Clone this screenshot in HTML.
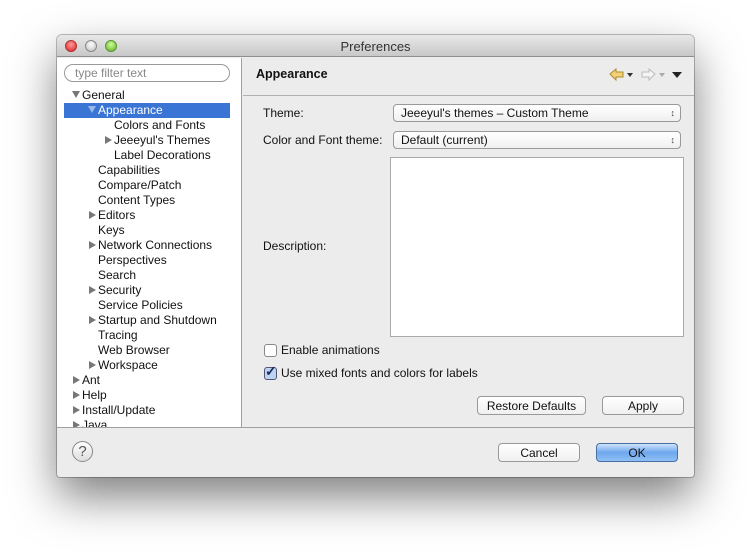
<!DOCTYPE html>
<html><head><style>
*{margin:0;padding:0;box-sizing:border-box}
body{width:751px;height:557px;background:#fff;font-family:"Lucida Grande","Liberation Sans",sans-serif;font-size:12px;color:#111;position:relative;overflow:hidden}
.win{position:absolute;left:57px;top:35px;width:637px;height:442px;background:#ececec;border-radius:5px 5px 3px 3px;box-shadow:0 20px 45px rgba(0,0,0,.5),0 0 0 1px rgba(0,0,0,.25)}
.title{position:absolute;left:0;top:0;width:637px;height:22px;border-radius:5px 5px 0 0;background:linear-gradient(#e8e8e8,#c8c8c8);border-bottom:1px solid #8e8e8e;text-align:center;font-size:13px;line-height:23px;color:#333}
.tl{position:absolute;top:5px;width:12px;height:12px;border-radius:50%;border:1px solid #888}
.left{position:absolute;left:0;top:23px;width:185px;height:369px;background:#fff;border-right:1px solid #a0a0a0;overflow:hidden}
.filter{position:absolute;left:7px;top:6px;width:166px;height:18px;border:1px solid #999;border-radius:9px;background:#fff;color:#888;font-size:12px;line-height:17px;padding-left:10px}
.t{position:absolute;font-size:12px;white-space:nowrap;line-height:17px}
.tri{position:absolute;width:0;height:0}
.r{border-top:4px solid transparent;border-bottom:4px solid transparent;border-left:7px solid #777}
.d{border-left:4px solid transparent;border-right:4px solid transparent;border-top:7px solid #777}
.sel{position:absolute;left:7px;top:45px;width:166px;height:15px;background:#3a75d5}
.lbl{position:absolute;font-size:12px;white-space:nowrap}
.combo{position:absolute;height:18px;background:linear-gradient(#fff,#f0f0f0);border:1px solid #999;border-radius:4px;font-size:12px;line-height:17px;padding-left:7px}
.combo:after{content:"\2195";position:absolute;right:5px;top:0;font-size:9px;color:#444}
.btn{position:absolute;height:19px;background:linear-gradient(#fff,#f0f0f0);border:1px solid #999;border-radius:4px;font-size:12px;line-height:18px;text-align:center}
.cb{position:absolute;width:13px;height:13px;border:1px solid #888;border-radius:3px;background:#fff}
</style></head><body>
<div class="win">
<div class="title">Preferences</div>
<div class="tl" style="left:8px;background:radial-gradient(circle at 50% 35%,#f99,#d22);border-color:#a33"></div>
<div class="tl" style="left:28px;background:radial-gradient(circle at 50% 35%,#fff,#bbb)"></div>
<div class="tl" style="left:48px;background:radial-gradient(circle at 50% 35%,#cf9,#6a2);border-color:#593"></div>
<div class="left">
<div class="filter">type filter text</div>
<div class="sel"></div>
<div class="tri d" style="left:15px;top:33px"></div><div class="t" style="left:25px;top:29px">General</div>
<div class="tri d" style="left:31px;top:48px;border-top-color:#9ab8e8"></div><div class="t" style="left:41px;top:44px;color:#fff">Appearance</div>
<div class="t" style="left:57px;top:59px">Colors and Fonts</div>
<div class="tri r" style="left:48px;top:78px"></div><div class="t" style="left:57px;top:74px">Jeeeyul's Themes</div>
<div class="t" style="left:57px;top:89px">Label Decorations</div>
<div class="t" style="left:41px;top:104px">Capabilities</div>
<div class="t" style="left:41px;top:119px">Compare/Patch</div>
<div class="t" style="left:41px;top:134px">Content Types</div>
<div class="tri r" style="left:32px;top:153px"></div><div class="t" style="left:41px;top:149px">Editors</div>
<div class="t" style="left:41px;top:164px">Keys</div>
<div class="tri r" style="left:32px;top:183px"></div><div class="t" style="left:41px;top:179px">Network Connections</div>
<div class="t" style="left:41px;top:194px">Perspectives</div>
<div class="t" style="left:41px;top:209px">Search</div>
<div class="tri r" style="left:32px;top:228px"></div><div class="t" style="left:41px;top:224px">Security</div>
<div class="t" style="left:41px;top:239px">Service Policies</div>
<div class="tri r" style="left:32px;top:258px"></div><div class="t" style="left:41px;top:254px">Startup and Shutdown</div>
<div class="t" style="left:41px;top:269px">Tracing</div>
<div class="t" style="left:41px;top:284px">Web Browser</div>
<div class="tri r" style="left:32px;top:303px"></div><div class="t" style="left:41px;top:299px">Workspace</div>
<div class="tri r" style="left:16px;top:318px"></div><div class="t" style="left:25px;top:314px">Ant</div>
<div class="tri r" style="left:16px;top:333px"></div><div class="t" style="left:25px;top:329px">Help</div>
<div class="tri r" style="left:16px;top:348px"></div><div class="t" style="left:25px;top:344px">Install/Update</div>
<div class="tri r" style="left:16px;top:363px"></div><div class="t" style="left:25px;top:359px">Java</div>
</div>
<div style="position:absolute;left:186px;top:23px;width:451px;height:38px;border-bottom:1px solid #b0b0b0"></div>
<div class="lbl" style="left:199px;top:32px;font-weight:bold;font-size:12.5px">Appearance</div>
<svg style="position:absolute;left:552px;top:33px" width="80" height="14">
<path d="M1 6 L7 1 L7 4 L14 4 L14 9 L7 9 L7 12 Z" fill="#f5d27a" stroke="#b08a2a"/>
<path d="M18 5 L24 5 L21 9Z" fill="#333"/>
<path d="M46 6 L40 1 L40 4 L33 4 L33 9 L40 9 L40 12 Z" fill="#f4f4f4" stroke="#bbb"/>
<path d="M50 5 L56 5 L53 9Z" fill="#aaa"/>
<path d="M63 4 L73 4 L68 10Z" fill="#222"/>
</svg>
<div class="lbl" style="left:206px;top:71px">Theme:</div>
<div class="combo" style="left:336px;top:69px;width:288px">Jeeeyul's themes – Custom Theme</div>
<div class="lbl" style="left:206px;top:98px">Color and Font theme:</div>
<div class="combo" style="left:336px;top:96px;width:288px">Default (current)</div>
<div style="position:absolute;left:333px;top:122px;width:294px;height:180px;background:#fff;border:1px solid #aaa"></div>
<div class="lbl" style="left:206px;top:204px">Description:</div>
<div class="cb" style="left:207px;top:309px"></div>
<div class="lbl" style="left:224px;top:308px">Enable animations</div>
<div class="cb" style="left:207px;top:332px;background:#bcd3f2;border-color:#557"></div>
<div class="lbl" style="left:208px;top:328px;font-size:14px;font-weight:bold;color:#1a2a5a">✓</div>
<div class="lbl" style="left:224px;top:331px">Use mixed fonts and colors for labels</div>
<div class="btn" style="left:420px;top:361px;width:109px">Restore Defaults</div>
<div class="btn" style="left:545px;top:361px;width:82px">Apply</div>
<div style="position:absolute;left:0;top:392px;width:637px;height:1px;background:#a0a0a0"></div>
<div style="position:absolute;left:15px;top:406px;width:21px;height:21px;border-radius:50%;border:1px solid #888;background:linear-gradient(#fff,#ddd);text-align:center;font-size:15px;line-height:19px;color:#555">?</div>
<div class="btn" style="left:441px;top:408px;width:82px">Cancel</div>
<div class="btn" style="left:539px;top:408px;width:82px;background:linear-gradient(#cfe3fb,#6ea7ee 50%,#8fc0f6);border-color:#4a6fa5">OK</div>
</div>
</body></html>
